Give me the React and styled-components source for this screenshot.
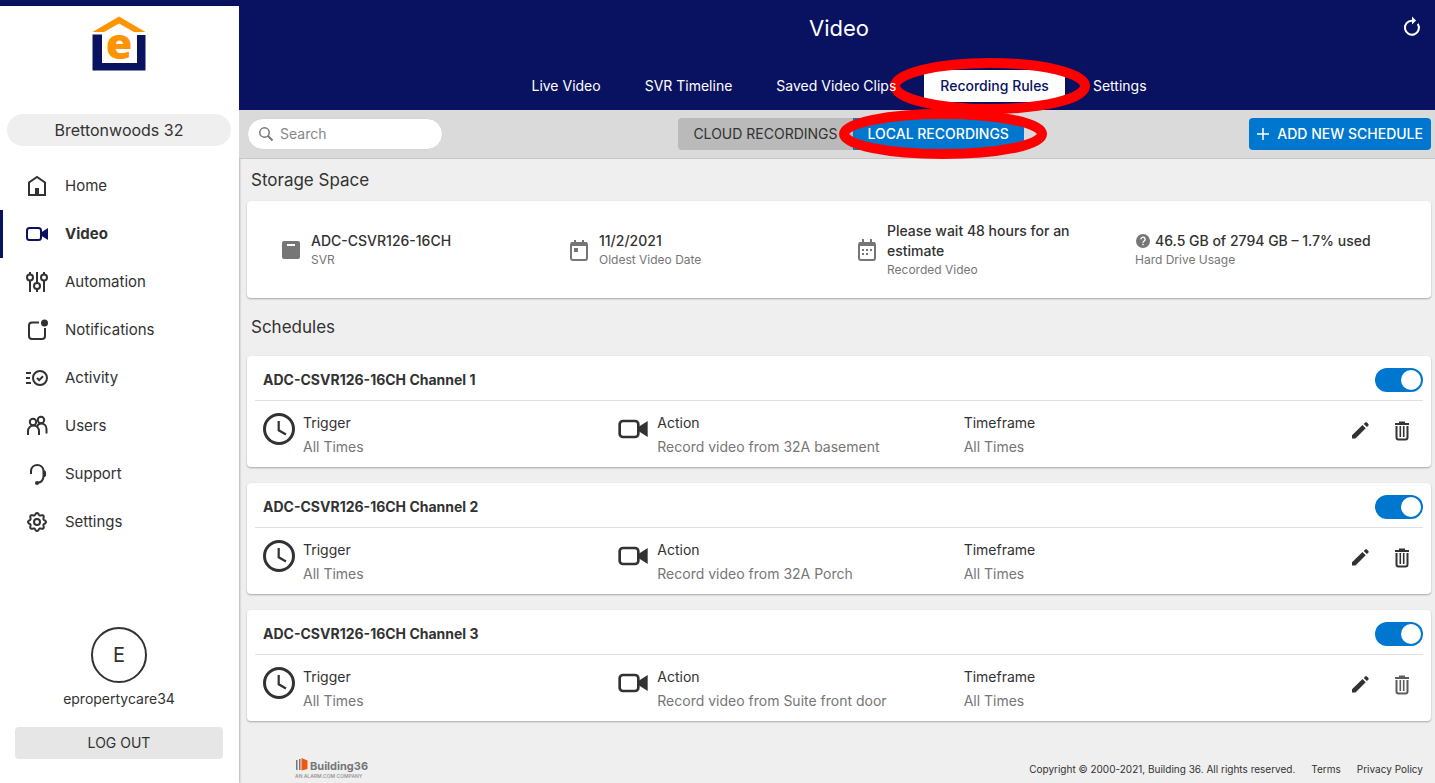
import React, { useState } from "react";
import styled, { createGlobalStyle, css } from "styled-components";

const navItems = [
  { name: "Home", icon: HomeIcon },
  { name: "Video", icon: CameraIcon, active: true },
  { name: "Automation", icon: SlidersIcon },
  { name: "Notifications", icon: NotificationIcon },
  { name: "Activity", icon: ActivityIcon },
  { name: "Users", icon: UsersIcon },
  { name: "Support", icon: SupportIcon },
  { name: "Settings", icon: GearIcon },
];

const tabs = [
  "Live Video",
  "SVR Timeline",
  "Saved Video Clips",
  "Recording Rules",
  "Settings",
];

const storage = [
  { value: "ADC-CSVR126-16CH", label: "SVR", icon: DeviceIcon },
  { value: "11/2/2021", label: "Oldest Video Date", icon: DateIcon },
  {
    value: "Please wait 48 hours for an estimate",
    label: "Recorded Video",
    icon: CalendarIcon,
  },
  {
    value: "46.5 GB of 2794 GB – 1.7% used",
    label: "Hard Drive Usage",
    help: true,
  },
];

const schedules = [
  { id: 1, title: "ADC-CSVR126-16CH Channel 1", camera: "32A basement" },
  { id: 2, title: "ADC-CSVR126-16CH Channel 2", camera: "32A Porch" },
  {
    id: 3,
    title: "ADC-CSVR126-16CH Channel 3",
    camera: "Suite front door",
    dimDelete: true,
  },
];

export default function App() {
  const [enabled, setEnabled] = useState({ 1: true, 2: true, 3: true });

  return (
    <>
      <GlobalStyle />
      <Page>
        <Sidebar>
          <LogoLink href="#home" aria-label="Home page">
            <HouseLogo />
          </LogoLink>
          <LocationButton type="button">Brettonwoods 32</LocationButton>
          <Nav>
            {navItems.map(({ name, icon: Icon, active }) => (
              <NavLink key={name} href={`#${name.toLowerCase()}`} $active={active}>
                <Icon />
                {name}
              </NavLink>
            ))}
          </Nav>
          <Account>
            <Avatar>E</Avatar>
            <UserName>epropertycare34</UserName>
            <LogoutButton type="button">LOG OUT</LogoutButton>
          </Account>
        </Sidebar>

        <Main>
          <Header>
            <TitleRow>
              <h1>Video</h1>
              <RefreshButton type="button" aria-label="Refresh">
                <RefreshIcon />
              </RefreshButton>
            </TitleRow>
            <Tabs>
              {tabs.map((tab) => (
                <Tab key={tab} href="#video" $active={tab === "Recording Rules"}>
                  {tab}
                  {tab === "Recording Rules" && (
                    <Ring width={200} height={56} left="47%" />
                  )}
                </Tab>
              ))}
            </Tabs>
          </Header>

          <Toolbar>
            <SearchArea>
              <SearchBox>
                <SearchIcon />
                <input type="search" placeholder="Search" aria-label="Search" />
              </SearchBox>
            </SearchArea>
            <Segments>
              <Segment type="button">CLOUD RECORDINGS</Segment>
              <Segment type="button" $active>
                LOCAL RECORDINGS
                <Ring width={208} height={50} left="53%" />
              </Segment>
            </Segments>
            <AddButton type="button">
              <PlusIcon />
              ADD NEW SCHEDULE
            </AddButton>
          </Toolbar>

          <Content>
            <SectionTitle>Storage Space</SectionTitle>
            <StorageCard>
              {storage.map(({ value, label, icon: Icon, help }) => (
                <StorageItem key={label} $hasIcon={!!Icon}>
                  {Icon && <Icon />}
                  <StorageText>
                    <StorageValue>
                      {help && <HelpIcon />}
                      {value}
                    </StorageValue>
                    <StorageLabel>{label}</StorageLabel>
                  </StorageText>
                </StorageItem>
              ))}
            </StorageCard>

            <SectionTitle $spaced>Schedules</SectionTitle>
            <ScheduleList>
              {schedules.map((s) => (
                <ScheduleCard key={s.id}>
                  <ScheduleHead>
                    <h3>{s.title}</h3>
                    <Toggle
                      type="checkbox"
                      aria-label={s.title}
                      checked={enabled[s.id]}
                      onChange={() =>
                        setEnabled({ ...enabled, [s.id]: !enabled[s.id] })
                      }
                    />
                  </ScheduleHead>
                  <ScheduleBody>
                    <Detail>
                      <ClockIcon />
                      <dl>
                        <dt>Trigger</dt>
                        <dd>All Times</dd>
                      </dl>
                    </Detail>
                    <Detail>
                      <CameraIcon size={32} />
                      <dl>
                        <dt>Action</dt>
                        <dd>Record video from {s.camera}</dd>
                      </dl>
                    </Detail>
                    <Detail>
                      <dl>
                        <dt>Timeframe</dt>
                        <dd>All Times</dd>
                      </dl>
                    </Detail>
                    <RowActions>
                      <IconButton type="button" aria-label={`Edit ${s.title}`}>
                        <PencilIcon />
                      </IconButton>
                      <IconButton
                        type="button"
                        aria-label={`Delete ${s.title}`}
                        $dim={s.dimDelete}
                      >
                        <TrashIcon />
                      </IconButton>
                    </RowActions>
                  </ScheduleBody>
                </ScheduleCard>
              ))}
            </ScheduleList>
          </Content>

          <Footer>
            <BuildingLogo />
            <FooterLinks>
              <span>
                Copyright © 2000-2021, Building 36. All rights reserved.
              </span>
              <a href="#terms">Terms</a>
              <a href="#privacy">Privacy Policy</a>
            </FooterLinks>
          </Footer>
        </Main>
      </Page>
    </>
  );
}

/* ---------- icons ---------- */

function HouseLogo() {
  return (
    <svg width="54" height="66" viewBox="0 -6 54 66" aria-hidden="true">
      <path d="M27 0.500 53.500 16H42L27 7.500 12 16H0.500Z" fill="#ff9400" />
      <path d="M0.500 18.500H10V47h35V19h8.500v35.500H0.500Z" fill="#081261" />
      <text
        x="27"
        y="43"
        textAnchor="middle"
        fill="#ff9400"
        fontFamily="Open Sans, sans-serif"
        fontWeight="800"
        fontSize="43"
      >
        e
      </text>
    </svg>
  );
}

function HomeIcon() {
  return (
    <svg width="24" height="24" viewBox="0 0 24 24" fill="none">
      <path d="M4 21V8.500L12 3l8 5.500V21Z" stroke="currentColor" strokeWidth="2" />
      <path d="M10 14h4v7h-4z" fill="currentColor" />
    </svg>
  );
}

function CameraIcon({ size = 24 }) {
  return (
    <svg width={size} height={size} viewBox="0 0 24 24" fill="none">
      <rect x="2" y="6" width="14" height="12" rx="2.500" stroke="currentColor" strokeWidth="2" />
      <path d="M16 10.500 23 6v12l-7-4.500Z" fill="currentColor" />
    </svg>
  );
}

function SlidersIcon() {
  return (
    <svg width="24" height="24" viewBox="0 0 24 24" fill="none" stroke="currentColor" strokeWidth="2">
      <path d="M5 2v2M5 10v12M12 2v11M12 19v3M19 2v2M19 10v12" />
      <circle cx="5" cy="7.500" r="3" />
      <circle cx="12" cy="16" r="3" />
      <circle cx="19" cy="7.500" r="3" />
    </svg>
  );
}

function NotificationIcon() {
  return (
    <svg width="24" height="24" viewBox="0 0 24 24" fill="none">
      <path
        d="M14 4.500H7a3 3 0 0 0-3 3V18a3 3 0 0 0 3 3h10a3 3 0 0 0 3-3v-8"
        stroke="currentColor"
        strokeWidth="2"
      />
      <circle cx="19.500" cy="5" r="3.500" fill="currentColor" />
    </svg>
  );
}

function ActivityIcon() {
  return (
    <svg width="24" height="24" viewBox="0 0 24 24" fill="none" stroke="currentColor" strokeWidth="2">
      <path d="M1 7h5M1 12h4M1 17h5" />
      <circle cx="15" cy="12" r="7" />
      <path d="m12 12 2.200 2.200L18 10.300" />
    </svg>
  );
}

function UsersIcon() {
  return (
    <svg width="24" height="24" viewBox="0 0 24 24" fill="none" stroke="currentColor" strokeWidth="2">
      <circle cx="8" cy="8" r="3.200" />
      <circle cx="16" cy="6" r="3.200" />
      <path d="M3 21v-4a5.500 5.500 0 0 1 11 0V21" />
      <path d="M12 13c.6-2.200 2-3.500 4-3.500 3 0 5.500 2.300 5.500 5.500v4.500" />
    </svg>
  );
}

function SupportIcon() {
  return (
    <svg width="24" height="24" viewBox="0 0 24 24" fill="none">
      <path
        d="M6 12V8.500a6.300 6.300 0 0 1 12.500 0V14c0 4-2.500 6.500-6.500 7"
        stroke="currentColor"
        strokeWidth="2"
      />
      <path d="M18 8.500h2l1 1v4l-1 1.500h-2Z" fill="currentColor" />
      <circle cx="12" cy="21" r="2" fill="currentColor" />
    </svg>
  );
}

// wavy outline with eight rounded teeth
const gearPoints = Array.from({ length: 96 }, (_, i) => {
  const a = (i / 96) * Math.PI * 2;
  const r = 8 + Math.cos(8 * a);
  return `${(12 + r * Math.cos(a)).toFixed(2)},${(12 + r * Math.sin(a)).toFixed(2)}`;
}).join(" ");

function GearIcon() {
  return (
    <svg width="24" height="24" viewBox="0 0 24 24" fill="none" stroke="currentColor" strokeWidth="2">
      <polygon points={gearPoints} />
      <circle cx="12" cy="12" r="3" />
    </svg>
  );
}

function RefreshIcon() {
  return (
    <svg width="24" height="24" viewBox="0 0 24 24" fill="none">
      <path d="M12 4.700a7 7 0 1 0 5.800 3.200" stroke="currentColor" strokeWidth="2" />
      <path d="M12 0.500v8l4-3.900Z" fill="currentColor" />
    </svg>
  );
}

function SearchIcon() {
  return (
    <svg width="16" height="16" viewBox="0 0 16 16" fill="none" stroke="currentColor">
      <circle cx="6.500" cy="6.500" r="4.700" strokeWidth="1.500" />
      <path d="m10 10 4.500 4.500" strokeWidth="2" />
    </svg>
  );
}

function PlusIcon() {
  return (
    <svg width="12" height="12" viewBox="0 0 12 12" stroke="currentColor" strokeWidth="1.500">
      <path d="M6 0v12M0 6h12" />
    </svg>
  );
}

function DeviceIcon() {
  return (
    <svg width="24" height="24" viewBox="0 0 24 24">
      <rect x="3" y="3" width="18" height="18" rx="2" fill="currentColor" />
      <path d="M8 6h8v2H8z" fill="#fff" />
    </svg>
  );
}

function DateIcon() {
  return (
    <svg width="24" height="24" viewBox="0 0 24 24" fill="none">
      <rect x="4" y="5" width="16" height="17" rx="2" stroke="currentColor" strokeWidth="2" />
      <path d="M4 4h16v4H4zM7 2h2v3H7zM15 2h2v3h-2zM7 10h4v4H7z" fill="currentColor" />
    </svg>
  );
}

function CalendarIcon() {
  return (
    <svg width="24" height="24" viewBox="0 0 24 24" fill="none">
      <rect x="4" y="5" width="16" height="17" rx="2" stroke="currentColor" strokeWidth="2" />
      <path d="M4 4h16v4H4zM7 1h2v4H7zM15 1h2v4h-2z" fill="currentColor" />
      <path
        d="M7 11h2v2H7zM11 11h2v2h-2zM15 11h2v2h-2zM7 15h2v2H7zM11 15h2v2h-2z"
        fill="currentColor"
      />
    </svg>
  );
}

function HelpIcon() {
  return (
    <svg width="16" height="16" viewBox="0 0 16 16" fill="none">
      <circle cx="8" cy="8" r="7" fill="#767676" />
      <path
        d="M5.900 6.300a2.100 2.100 0 1 1 3.300 1.700C8.300 8.600 8 8.900 8 9.700"
        stroke="#fff"
        strokeWidth="1.400"
      />
      <path d="M7.300 10.800h1.400v1.400H7.300z" fill="#fff" />
    </svg>
  );
}

function ClockIcon() {
  return (
    <svg width="32" height="32" viewBox="0 0 32 32" fill="none" stroke="currentColor">
      <circle cx="16" cy="16" r="14.500" strokeWidth="3" />
      <path d="M15.700 8v9.300l7.300 4.200" strokeWidth="2.200" />
    </svg>
  );
}

function PencilIcon() {
  return (
    <svg width="24" height="24" viewBox="0 0 24 24" fill="currentColor">
      <path d="M4 19.500v-3.300L14.500 6l3.200 3.200L7.500 19.500ZM15.700 4.900l1.500-1.400c.5-.5 1.300-.4 1.800.1l1.300 1.400c.5.500.5 1.200 0 1.700l-1.400 1.400Z" />
    </svg>
  );
}

function TrashIcon() {
  return (
    <svg width="24" height="24" viewBox="0 0 24 24" fill="none" stroke="currentColor">
      <path d="M5 5h14" strokeWidth="2" />
      <path d="M9 3.500h6" strokeWidth="2" />
      <path d="M6.500 7v11.500a2 2 0 0 0 2 2h7a2 2 0 0 0 2-2V7" strokeWidth="2" />
      <path d="M10.300 7v11M13.700 7v11" strokeWidth="1.600" />
    </svg>
  );
}

function BuildingLogo() {
  return (
    <svg width="76" height="24" viewBox="0 0 76 24" role="img" aria-label="Building36">
      <path d="M1 3h1.500v10H1zM4 2h1.500v11H4z" fill="#777" />
      <path d="M6.500 1l6 2.500V12l-6 1.500Z" fill="#f0560f" />
      <text x="15" y="13" fontFamily="Inter, sans-serif" fontWeight="700" fontSize="11" fill="#777">
        Building36
      </text>
      <text x="0" y="21" fontFamily="Inter, sans-serif" fontWeight="600" fontSize="5" fill="#999">
        AN ALARM.COM COMPANY
      </text>
    </svg>
  );
}

function Ring({ width, height, left }) {
  return (
    <RingSvg
      width={width}
      height={height}
      viewBox={`0 0 ${width} ${height}`}
      $left={left}
      aria-hidden="true"
    >
      <ellipse
        cx={width / 2}
        cy={height / 2}
        rx={width / 2 - 5}
        ry={height / 2 - 5}
        fill="none"
        stroke="#ff0000"
        strokeWidth="10"
      />
    </RingSvg>
  );
}

/* ---------- styles ---------- */

const GlobalStyle = createGlobalStyle`
  * {
    box-sizing: border-box;
  }
  body {
    margin: 0;
    background: #efefef;
    color: #323232;
    font-family: Inter, "Liberation Sans", sans-serif;
    font-size: 14px;
    line-height: 20px;
  }
  h1, h2, h3, dl, dd {
    margin: 0;
  }
  button, input {
    font: inherit;
    color: inherit;
    border: 0;
    padding: 0;
  }
  button {
    cursor: pointer;
  }
  a {
    color: inherit;
    text-decoration: none;
  }
  svg {
    flex: none;
  }
`;

const Page = styled.div`
  display: flex;
  min-height: 100vh;
  border-top: 6px solid #081261;
`;

const Sidebar = styled.aside`
  display: flex;
  flex-direction: column;
  flex: none;
  width: 239px;
  padding-bottom: 24px;
  background: #fff;
  box-shadow: 1px 0 2px rgba(0, 0, 0, 0.25);
`;

const LogoLink = styled.a`
  display: flex;
  justify-content: center;
  margin: 0 8px 0 7px;
  padding: 4px 0 38px;
`;

const LocationButton = styled.button`
  height: 32px;
  margin: 0 8px 16px 7px;
  border-radius: 16px;
  background: #efefef;
  font-size: 16px;
`;

const Nav = styled.nav`
  display: flex;
  flex-direction: column;
`;

const NavLink = styled.a`
  display: flex;
  align-items: center;
  gap: 16px;
  height: 48px;
  padding-left: 22px;
  border-left: 3px solid transparent;
  font-size: 15px;
  line-height: 24px;

  ${({ $active }) =>
    $active &&
    css`
      border-color: #081261;
      font-weight: 700;
      svg {
        color: #081261;
      }
    `}
`;

const Account = styled.div`
  display: flex;
  flex-direction: column;
  align-items: center;
  margin: auto 16px 0 15px;
`;

const Avatar = styled.div`
  display: flex;
  align-items: center;
  justify-content: center;
  width: 56px;
  height: 56px;
  border: 2px solid #323232;
  border-radius: 50%;
  font-size: 20px;
`;

const UserName = styled.div`
  margin: 6px 0 18px;
`;

const LogoutButton = styled.button`
  width: 100%;
  height: 32px;
  border-radius: 4px;
  background: #e6e6e6;
`;

const Main = styled.main`
  display: flex;
  flex-direction: column;
  flex: 1;
  min-width: 0;
`;

const Header = styled.header`
  height: 104px;
  padding: 0 4px 8px 8px;
  background: #081261;
  color: #fff;
`;

const TitleRow = styled.div`
  display: grid;
  grid-template-columns: 1fr auto 1fr;
  align-items: center;
  height: 44px;
  margin-bottom: 20px;

  h1 {
    grid-column: 2;
    font-size: 22px;
    font-weight: 400;
    line-height: 32px;
  }
`;

const RefreshButton = styled.button`
  display: flex;
  justify-self: end;
  margin-right: 7px;
  background: none;
`;

const Tabs = styled.nav`
  display: flex;
  justify-content: center;
  gap: 12px;
`;

/* labels beside the selected tab stay above its ellipse */
const Tab = styled.a`
  position: relative;
  z-index: 3;
  padding: 6px 16px;
  white-space: nowrap;

  ${({ $active }) =>
    $active &&
    css`
      z-index: 2;
      background: #fff;
      color: #081261;
      font-weight: 500;
    `}
`;

/* ellipse drawn over the selected tab */
const RingSvg = styled.svg`
  position: absolute;
  z-index: 2;
  top: 50%;
  left: ${({ $left }) => $left};
  transform: translate(-50%, -50%);
  pointer-events: none;
`;

const Toolbar = styled.div`
  display: flex;
  align-items: center;
  justify-content: space-between;
  height: 49px;
  padding: 0 4px 0 8px;
  border-bottom: 1px solid #c8c8c8;
  background: #dadada;
`;

const SearchArea = styled.div`
  width: 206px;
`;

const SearchBox = styled.label`
  display: flex;
  align-items: center;
  gap: 6px;
  width: 196px;
  height: 32px;
  padding: 0 10px;
  border: 1px solid #d4d4d4;
  border-radius: 16px;
  background: #fff;
  color: #767676;

  input {
    width: 100%;
    outline: none;
    background: none;
  }
  input::placeholder {
    color: #868686;
  }
`;

const Segments = styled.div`
  display: flex;
`;

const Segment = styled.button`
  position: relative;
  height: 32px;
  padding: 0 15px;
  border-radius: 4px 0 0 4px;
  background: #bababa;

  ${({ $active }) =>
    $active &&
    css`
      border-radius: 0 4px 4px 0;
      background: #0077cf;
      color: #fff;
      font-weight: 500;
    `}
`;

const AddButton = styled.button`
  display: flex;
  align-items: center;
  gap: 8px;
  height: 32px;
  padding: 0 8px;
  border-radius: 4px;
  background: #0077cf;
  color: #fff;
  font-weight: 500;
`;

const Content = styled.div`
  padding: 8px 4px 8px 8px;
`;

const SectionTitle = styled.h2`
  margin: ${({ $spaced }) => ($spaced ? "16px 4px" : "0 4px 8px")};
  font-size: 17px;
  font-weight: 400;
  line-height: 26px;
`;

const Card = styled.section`
  border-radius: 4px;
  background: #fff;
  box-shadow: 0 1px 2px rgba(0, 0, 0, 0.3);
`;

const StorageCard = styled(Card)`
  display: grid;
  grid-template-columns: repeat(4, 1fr);
  align-items: center;
  padding: 20px 16px 19px;
`;

const StorageItem = styled.div`
  display: flex;
  align-items: center;
  padding-left: ${({ $hasIcon }) => ($hasIcon ? "16px" : "0")};
  color: #767676;
`;

const StorageText = styled.div`
  padding: 0 8px;
`;

const StorageValue = styled.div`
  display: flex;
  align-items: center;
  gap: 4px;
  color: #323232;
  font-weight: 500;
`;

const StorageLabel = styled.div`
  font-size: 12px;
  line-height: 18px;
`;

const ScheduleList = styled.div`
  display: flex;
  flex-direction: column;
  gap: 16px;
`;

const ScheduleCard = styled(Card)`
  padding: 0 8px 8px;
`;

const ScheduleHead = styled.div`
  display: flex;
  align-items: center;
  justify-content: space-between;
  height: 45px;
  padding: 4px 0 0 8px;
  border-bottom: 1px solid #e0e0e0;

  h3 {
    font-size: 14px;
    font-weight: 700;
  }
`;

const Toggle = styled.input`
  appearance: none;
  display: flex;
  width: 48px;
  height: 24px;
  margin: 0;
  padding: 2px;
  border-radius: 12px;
  background: #999;
  cursor: pointer;

  &::before {
    content: "";
    width: 20px;
    height: 20px;
    border-radius: 50%;
    background: #fff;
  }
  &:checked {
    justify-content: flex-end;
    background: #0077cf;
  }
`;

const ScheduleBody = styled.div`
  display: grid;
  grid-template-columns: 354fr 346fr 384fr 75px;
  padding: 10px 0 0 8px;
`;

const Detail = styled.div`
  display: flex;
  gap: 8px;

  svg {
    margin-top: 2px;
  }
  dt,
  dd {
    line-height: 24px;
  }
  dd {
    color: #767676;
  }
`;

const RowActions = styled.div`
  display: flex;
  gap: 18px;
  padding-top: 8px;
`;

const IconButton = styled.button`
  display: flex;
  height: 24px;
  background: none;
  color: ${({ $dim }) => ($dim ? "#5c5c5c" : "#323232")};
`;

const Footer = styled.footer`
  display: flex;
  align-items: center;
  justify-content: space-between;
  margin-top: auto;
  padding: 0 12px 2px 56px;
`;

const FooterLinks = styled.div`
  display: flex;
  gap: 16px;
  font-size: 10px;
`;
